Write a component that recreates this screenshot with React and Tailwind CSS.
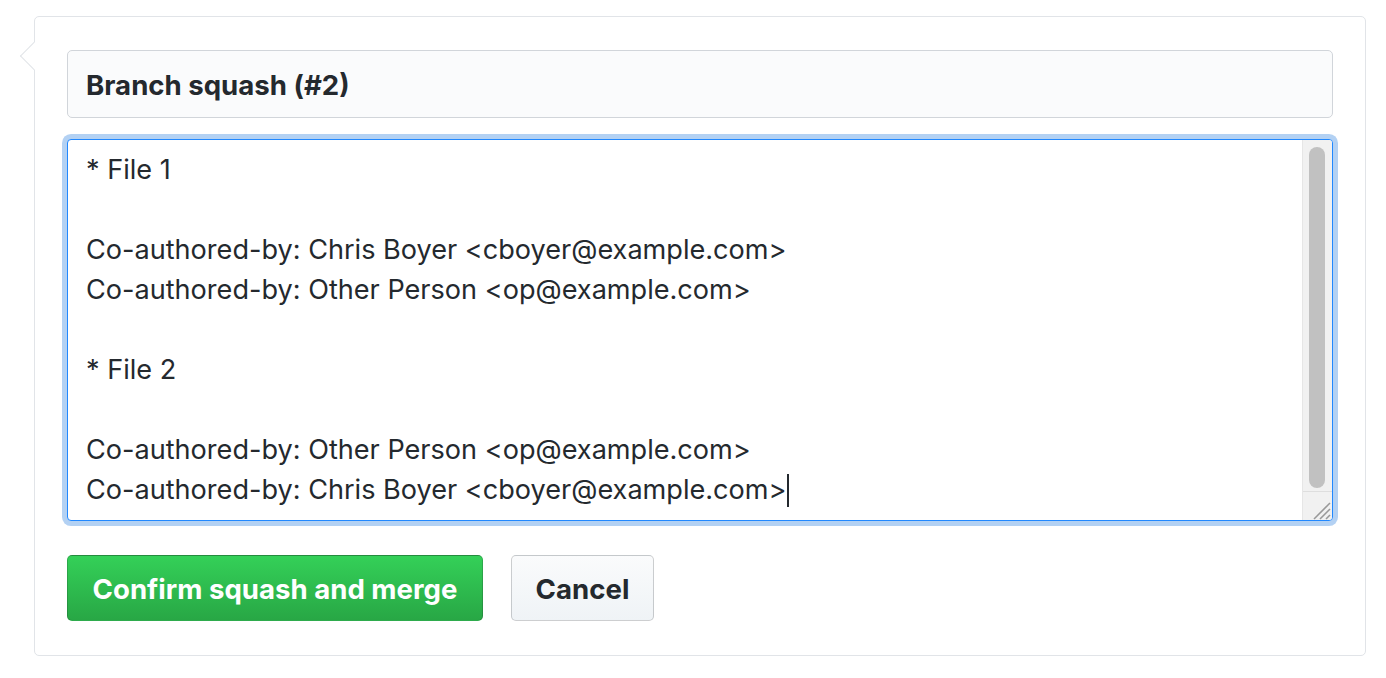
import React from "react";

const lines = [
  "* File 1",
  "",
  "Co-authored-by: Chris Boyer <cboyer@example.com>",
  "Co-authored-by: Other Person <op@example.com>",
  "",
  "* File 2",
  "",
  "Co-authored-by: Other Person <op@example.com>",
  "Co-authored-by: Chris Boyer <cboyer@example.com>",
];

export default function App() {
  return (
    <div className="w-[1386px] h-[678px] bg-white pt-[16px] pl-[34px]" style={{ fontFamily: "Inter, 'Liberation Sans', sans-serif" }}>
      <div className="relative w-[1332px] h-[640px] border border-[#e1e4e8] rounded-[5px] bg-white pt-[33px] pl-[32px] pr-[32px]">
        {/* caret */}
        <div className="absolute left-[-11px] top-[29px] w-[20px] h-[20px] rotate-45 bg-white border-l border-b border-[#e1e4e8]" />
        {/* title input */}
        <div className="relative h-[68px] border border-[#d1d5da] rounded-[5px] bg-[#fafbfc] flex items-center pl-[18px] pt-[3px] text-[27.6px] font-bold text-[#24292e]">
          Branch squash (#2)
        </div>
        {/* textarea */}
        <div className="relative mt-[21px] h-[382px] border border-[#2188ff] rounded-[4px] bg-white shadow-[0_0_0_5px_rgba(3,102,214,0.3)] flex overflow-hidden">
          <div className="flex-1 pl-[18px] pt-[10px] text-[27.1px] leading-[40px] text-[#24292e]">
            {lines.map((l, i) => (
              <div key={i} className="h-[40px] whitespace-pre flex items-center">
                {l}
                {i === lines.length - 1 && <span className="inline-block w-[2px] h-[33px] bg-[#24292e] ml-[1px]" />}
              </div>
            ))}
          </div>
          <div className="w-[30px] bg-[#f1f1f1] border-l border-[#e6e6e6] flex flex-col">
            <div className="flex-1 px-[6px] pt-[7px] pb-[2px]">
              <div className="w-[16px] h-[341px] bg-[#c1c1c1] rounded-full" />
            </div>
            <div className="h-[29px] border-t border-[#dedede] relative">
              <svg width="29" height="28" viewBox="0 0 29 28" className="absolute right-0 bottom-0">
                <line x1="11" y1="27" x2="27" y2="11" stroke="#999" strokeWidth="1.6" />
                <line x1="17" y1="27" x2="27" y2="17" stroke="#999" strokeWidth="1.6" />
                <line x1="23" y1="27" x2="27" y2="23" stroke="#999" strokeWidth="1.6" />
              </svg>
            </div>
          </div>
        </div>
        {/* buttons */}
        <div className="mt-[34px] flex gap-[28px]">
          <div className="h-[66px] w-[416px] rounded-[5px] border border-[rgba(27,31,35,0.2)] bg-[linear-gradient(#34d058,#28a745)] text-white text-[27.6px] font-bold flex items-center justify-center pt-[3px]">
            Confirm squash and merge
          </div>
          <div className="h-[66px] w-[143px] rounded-[5px] border border-[rgba(27,31,35,0.2)] bg-[linear-gradient(#fafbfc,#eff3f6)] text-[#24292e] text-[27.6px] font-bold flex items-center justify-center pt-[3px]">
            Cancel
          </div>
        </div>
      </div>
    </div>
  );
}
